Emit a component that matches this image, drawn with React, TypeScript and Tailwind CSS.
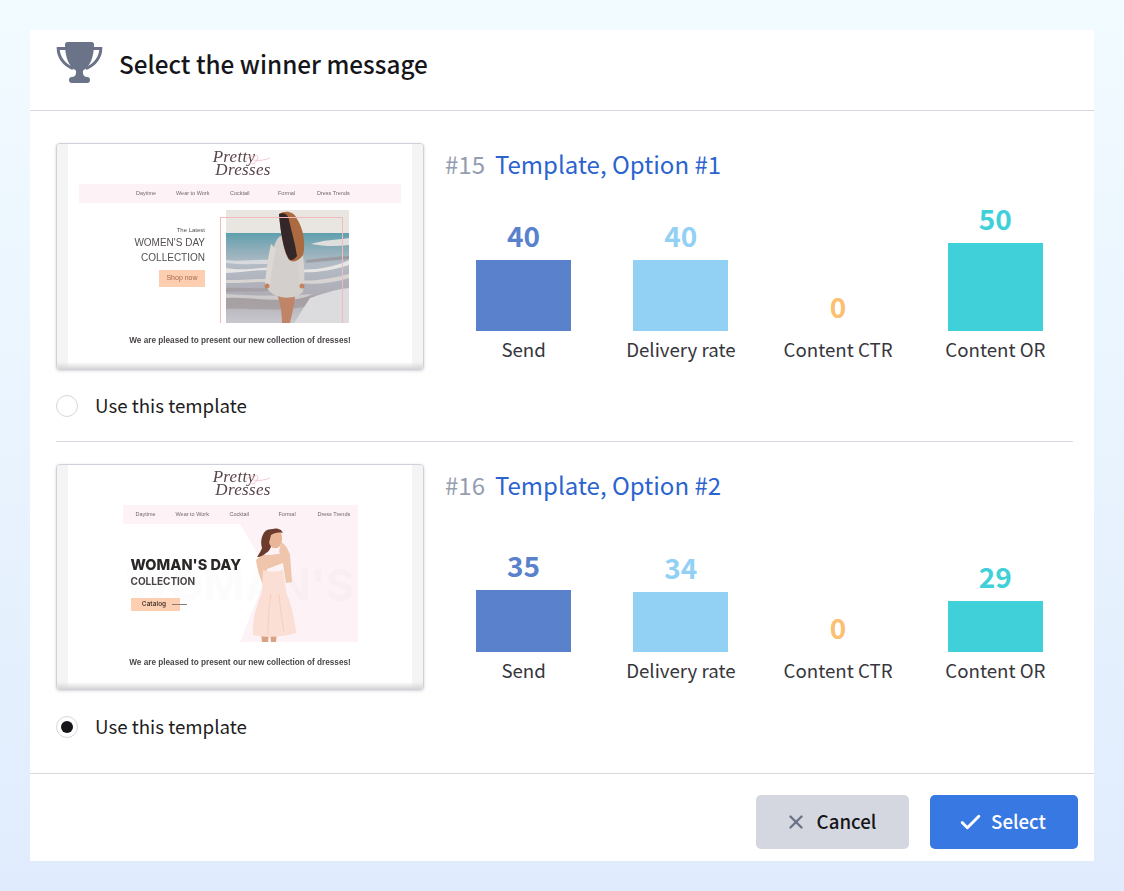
import { Check, X } from "lucide-react";

type Stat = { label: string; value: number; height: number; text: string; bar: string };

function stats(send: [number, number], rate: [number, number], or: [number, number]): Stat[] {
  return [
    { label: "Send", value: send[0], height: send[1], text: "text-[#5a82cc]", bar: "bg-[#5a82cc]" },
    { label: "Delivery rate", value: rate[0], height: rate[1], text: "text-[#92d0f4]", bar: "bg-[#92d0f4]" },
    { label: "Content CTR", value: 0, height: 0, text: "text-[#fbc070]", bar: "bg-[#fbc070]" },
    { label: "Content OR", value: or[0], height: or[1], text: "text-[#40d0da]", bar: "bg-[#40d0da]" },
  ];
}

function Trophy() {
  return (
    <svg className="-mt-[3px]" width="47" height="41" viewBox="0 0 47 41" fill="none">
      <path d="M10 6.500H2.200C2.200 15 8 23 17 26.500M37 6.500h7.800C44.800 15 39 23 30 26.500" stroke="#6b7388" strokeWidth="3" />
      <path
        d="M9 2.500A2.500 2.500 0 0 1 11.500 0h24A2.500 2.500 0 0 1 38 2.500C38 15 34 25 27 28.500V31c0 2.500 2 4 4 4H16c2 0 4-1.500 4-4v-2.500C13 25 9 15 9 2.500Z"
        fill="#6b7388"
      />
      <rect x="13" y="35" width="21" height="6" rx="3" fill="#6b7388" />
    </svg>
  );
}

function Logo() {
  return (
    <div className="relative flex h-[30px] flex-col items-center font-['Liberation_Serif',serif] text-[17px] italic leading-[13px] tracking-[0.3px] text-[#5a454b] blur-[0.3px]">
      <span className="-ml-[12px]">Pretty</span>
      <span className="ml-[6px]">Dresses</span>
      <svg className="absolute left-[35px] top-[2px]" width="28" height="16" viewBox="0 0 28 16" fill="none">
        <path d="M2 9C5 2 9 3 9 7 12 1 17 3 11 11 8 13 5 11 5 11M9 8c6 1 13 0 17-2" stroke="#f2bcc4" strokeWidth="0.8" />
      </svg>
    </div>
  );
}

function BeachPhoto() {
  return (
    <svg className="absolute left-[6px] top-0 blur-[0.7px]" width="123" height="113" viewBox="0 0 123 113">
      <defs>
        <linearGradient id="sea" x1="0" y1="0" x2="0" y2="1">
          <stop offset="0" stopColor="#5f9fae" />
          <stop offset="0.12" stopColor="#7fa9b5" />
          <stop offset="0.35" stopColor="#b3bcc6" />
          <stop offset="0.7" stopColor="#aeacb4" />
          <stop offset="1" stopColor="#c9c8ce" />
        </linearGradient>
      </defs>
      <rect width="123" height="24" fill="#e9e5e0" />
      <rect y="23" width="123" height="90" fill="url(#sea)" />
      <path d="M85 34c12-4 25-4 38-6v7c-14 2-27 1-38-1Z" fill="#dfdedf" />
      <path d="M0 50c14 2 30-1 44 0v4c-14 0-30 1-44-1Z" fill="#d7d9dc" />
      <path d="M0 58c20 4 40-3 60 0s42 2 63-8v5c-22 7-42 9-63 6S20 62 0 63Z" fill="#e8e6e5" />
      <path d="M80 50c14-2 28-3 43-4v3c-15 1-30 3-43 4Z" fill="#8f7d78" opacity="0.45" />
      <path d="M0 70c25 0 45-3 72 0 16 2 35-2 51-6v4c-16 5-34 7-52 5-25-3-45 0-71 0Z" fill="#d8d4d2" />
      <path d="M0 78c14-1 28 1 42 0v3c-14 1-28 0-42 1Z" fill="#93888a" opacity="0.4" />
      <path d="M0 88c20-3 50 4 85-2 10-2 4 8-8 11-25 5-55 1-77 2Z" fill="#a49c9e" opacity="0.8" />
      <path d="M0 84c30 2 55 2 86 0-4 3-10 4-14 5-25 3-50-2-72-1Z" fill="#dad7d6" opacity="0.7" />
      <path d="M84 88c14-5 28-9 39-10v35H68Z" fill="#dcdcdf" />
      {/* woman */}
      <path d="M51 84c3 8 5 19 5 29h8c2-9 5-20 5-29Z" fill="#c08468" />
      <path d="M52 28C46 36 43 60 41 78c6 11 27 13 36 4 2-16 2-42-5-54-5-5-14-5-20 0Z" fill="#d3cfcc" />
      <path d="M45 34c-3 13-5 28-6 40 0 3 4 3 5 1 1-12 3-24 6-36Z" fill="#ddd8d3" />
      <path d="M72 34c6 12 7 26 6 41-1 3-4 3-5 0l-1-26Z" fill="#d8d3cf" />
      <circle cx="41" cy="76" r="2.500" fill="#c4835f" />
      <circle cx="76" cy="76" r="2.500" fill="#c4835f" />
      <path d="M53 4c6-4 15-3 18 5 6 9 9 24 6 36-4 6-10 8-14 5-6-9-9-34-10-46Z" fill="#ab6a3f" />
      <path d="M53 4c5-2 9 0 10 6 2 10 6 22 8 36-3 4-6 5-8 3-6-9-9-33-10-45Z" fill="#33272a" />
    </svg>
  );
}

function WomanInDress() {
  return (
    <g>
      {/* legs */}
      <path d="M138 108l1 10h6l1-9ZM147 109l1 9h5l1-10Z" fill="#d9a383" />
      {/* arms and shoulders */}
      <path d="M133 36c4-5 10-6 14-5 8-1 15-3 20-1l2 28-6 1-3-20-16 6-3 18c-3-6-7-18-8-27Z" fill="#efc5ac" />
      <path d="M158 18c4 2 8 8 9 14l-6 5-5-9Z" fill="#efc5ac" />
      {/* dress */}
      <path d="M140 46c7 2 14 2 20 0l3 22c6 14 9 28 10 41-12 4-30 5-43 2-1-15 3-28 9-43Z" fill="#fbdfd4" />
      <path d="M148 70c-2 12-3 26-3 40M156 70c1 14 3 26 5 38" stroke="#f5cfc0" strokeWidth="1" fill="none" />
      {/* hair and face */}
      <path d="M139 24c-1 3-3 6-5 9 4 0 7-2 9-4 4-2 5-6 6-10l8-10c-3-3-9-5-13-3-5 3-7 11-5 18Z" fill="#6c3b2c" />
      <path d="M146 9c4-3 10-3 12 0 2 5 1 10-2 14-3 2-7 2-9-2-2-4-2-8-1-12Z" fill="#eab497" />
      <path d="M143 12c1-6 9-10 15-6l2 3c-5-1-9 0-12 2l-2 8Z" fill="#6c3b2c" />
    </g>
  );
}

const footerText = "whitespace-nowrap font-['Liberation_Sans',sans-serif] text-[8.200px] font-bold leading-[12px] text-[#4a464a]";

function Nav({ items, cls }: { items: [string, string][]; cls: string }) {
  return (
    <div className={`flex h-[19px] items-center bg-[#fdf3f7] text-[5.500px] text-[#6f6a68] ${cls}`}>
      {items.map(([name, itemCls]) => (
        <span key={name} className={`${itemCls} whitespace-nowrap`}>
          {name}
        </span>
      ))}
    </div>
  );
}

function FirstThumb() {
  return (
    <div className="flex flex-col items-center pt-[6px]">
      <Logo />
      <Nav
        cls="mt-[4px] w-[322px]"
        items={[
          ["Daytime", "w-[20px] ml-[57px]"],
          ["Wear to Work", "w-[34px] ml-[20px]"],
          ["Cocktail", "w-[20px] ml-[20px]"],
          ["Formal", "w-[18px] ml-[28px]"],
          ["Dress Trends", "w-[33px] ml-[21px]"],
        ]}
      />
      <div className="mt-[7px] flex h-[113px] w-[322px] font-['Liberation_Sans',sans-serif] text-[#55504f]">
        <div className="flex w-[126px] flex-col items-end pt-[15px]">
          <span className="text-[6px] leading-[10px]">The Latest</span>
          <span className="mt-[1px] whitespace-nowrap text-[10px] leading-[14px]">WOMEN'S DAY</span>
          <span className="whitespace-nowrap text-[10px] leading-[15px]">COLLECTION</span>
          <div className="mt-[5px] flex h-[17px] w-[46px] items-center justify-center bg-[#fdcfb0] text-[7px] text-[#a8664a]">
            Shop now
          </div>
        </div>
        <div className="relative ml-[15px] h-[113px] w-[129px]">
          <BeachPhoto />
          <div className="absolute left-0 top-[7px] h-[106px] w-[123px] border-l border-r border-t border-[#f4b9bd]" />
        </div>
      </div>
      <p className={`mt-[12px] ${footerText}`}>We are pleased to present our new collection of dresses!</p>
    </div>
  );
}

function SecondThumb() {
  return (
    <div className="flex flex-col items-center pt-[5px]">
      <Logo />
      <Nav
        cls="mt-[5px] w-[235px]"
        items={[
          ["Daytime", "w-[20px] ml-[13px]"],
          ["Wear to Work", "w-[34px] ml-[20px]"],
          ["Cocktail", "w-[20px] ml-[20px]"],
          ["Formal", "w-[18px] ml-[29px]"],
          ["Dress Trends", "w-[33px] ml-[21px]"],
        ]}
      />
      <div className="relative h-[118px] w-[235px] overflow-hidden font-['Inter',sans-serif]">
        <svg className="absolute left-0 top-0" width="235" height="118" viewBox="0 0 235 118">
          <path d="M117 0L145 48 117 118H235V0Z" fill="#fdf3f7" />
          <text x="2" y="77" fontFamily="Inter, sans-serif" fontSize="44" fontWeight="700" fill="#777" opacity="0.025">
            WOMAN'S
          </text>
          <WomanInDress />
        </svg>
        <div className="relative flex h-full flex-col items-start pl-[8px] pt-[31px]">
          <span className="whitespace-nowrap text-[14.500px] font-extrabold leading-[20px] text-[#2a2626]">WOMAN'S DAY</span>
          <span className="-mt-[1px] whitespace-nowrap text-[10px] font-bold leading-[14px] text-[#4a4545]">COLLECTION</span>
          <div className="mt-[10px] flex items-center">
            <div className="flex h-[13px] w-[49px] items-center justify-center bg-[#fdcfb0] pr-[2px] text-[6.500px] font-semibold text-[#4a3a35]">
              Catalog
            </div>
            <div className="-ml-[8px] h-px w-[15px] bg-[#8a7d78]" />
          </div>
        </div>
      </div>
      <p className={`mt-[15px] ${footerText}`}>We are pleased to present our new collection of dresses!</p>
    </div>
  );
}

function Thumb({ tall, children }: { tall: boolean; children: React.ReactNode }) {
  return (
    <div
      className={`relative w-[368px] shrink-0 overflow-hidden rounded-[4px] border border-[#cfd0dc] bg-white font-['Liberation_Sans',sans-serif] shadow-[0_1px_3px_rgba(80,80,100,0.25)] ${tall ? "h-[227px]" : "h-[226px]"}`}
    >
      <div className="flex h-full blur-[0.35px]">
        <div className="w-[11px] shrink-0 bg-[#f4f4f4]" />
        <div className="flex-1">{children}</div>
        <div className="w-[11px] shrink-0 bg-[#f4f4f4]" />
      </div>
      <div className="absolute bottom-0 left-0 h-[7px] w-full bg-gradient-to-b from-transparent to-[#d6d6d8]" />
    </div>
  );
}

function Radio({ on }: { on: boolean }) {
  return (
    <label className="flex h-[22px] items-center gap-[17px] text-[18.700px] text-[#1d1d22]">
      <span className="flex h-[22px] w-[22px] items-center justify-center rounded-full border border-[#d8d8dc] bg-white">
        {on && <span className="h-[12px] w-[12px] rounded-full bg-[#16161a]" />}
      </span>
      <span className="-mt-[2px]">Use this template</span>
    </label>
  );
}

function Option(props: {
  id: string;
  title: string;
  stats: Stat[];
  on: boolean;
  tall: boolean;
  pb: string;
  radioTop: string;
  thumb: React.ReactNode;
}) {
  return (
    <div>
      <div className="flex gap-[21px]">
        <Thumb tall={props.tall}>{props.thumb}</Thumb>
        <div className={`-mr-[6px] flex flex-1 flex-col ${props.pb}`}>
          <div className="flex h-[41px] items-center gap-[10px] text-[24px] leading-[41px]">
            <span className="text-[#949eb0]">{props.id}</span>
            <span className="text-[#2b63cf]">{props.title}</span>
          </div>
          <div className="mt-auto grid grid-cols-4 items-end">
            {props.stats.map((s) => (
              <div key={s.label} className="flex flex-col items-center">
                <span className={`mb-[9px] text-[28px] font-bold leading-[32px] ${s.text}`}>{s.value}</span>
                <div className={`w-[95px] ${s.bar}`} style={{ height: s.height }} />
                <span className="mt-[5px] whitespace-nowrap text-[18.700px] leading-[26px] text-[#36363c]">{s.label}</span>
              </div>
            ))}
          </div>
        </div>
      </div>
      <div className={props.radioTop}>
        <Radio on={props.on} />
      </div>
    </div>
  );
}

export default function App() {
  return (
    <div className="h-[891px] bg-gradient-to-b from-[#f2fbff] to-[#e0ecfd] p-[30px] font-['Noto_Sans_CJK_SC','Noto_Sans',sans-serif]">
      <div className="flex h-[831px] w-[1064px] flex-col bg-white">
        <div className="flex h-[81px] shrink-0 items-center gap-[16px] border-b border-[#d7d8e2] pb-[12px] pl-[26px]">
          <Trophy />
          <h1 className="text-[24.300px] font-medium leading-[36px] text-[#16161a]">Select the winner message</h1>
        </div>

        <div className="flex-1 px-[26px] pt-[32px]">
          <Option
            id="#15"
            title="Template, Option #1"
            stats={stats([40, 71], [40, 71], [50, 88])}
            on={false}
            tall
            pb="pb-[8px]"
            radioTop="mt-[25px]"
            thumb={<FirstThumb />}
          />
          <div className="-mr-[5px] mt-[24px] border-t border-[#d7d8e2]" />
          <div className="mt-[22px]">
            <Option
              id="#16"
              title="Template, Option #2"
              stats={stats([35, 62], [34, 60], [29, 51])}
              on
              tall={false}
              pb="pb-[7px]"
              radioTop="mt-[26px]"
              thumb={<SecondThumb />}
            />
          </div>
        </div>

        <div className="flex h-[88px] shrink-0 items-start justify-end gap-[21px] border-t border-[#d7d8dc] pr-[16px] pt-[21px]">
          <button className="flex h-[54px] w-[153px] items-center justify-center gap-[10px] rounded-[5px] bg-[#d4d7df] text-[18.700px] font-medium text-[#16161a]">
            <X size={22} strokeWidth={2.6} className="-ml-[4px] text-[#6b7388]" />
            <span className="-mt-[1px]">Cancel</span>
          </button>
          <button className="flex h-[54px] w-[148px] items-center justify-center gap-[8px] rounded-[5px] bg-[#3778e2] text-[18.700px] font-medium text-white">
            <Check size={25} strokeWidth={2.8} className="-ml-[4px]" />
            <span className="-mt-[1px]">Select</span>
          </button>
        </div>
      </div>
    </div>
  );
}
